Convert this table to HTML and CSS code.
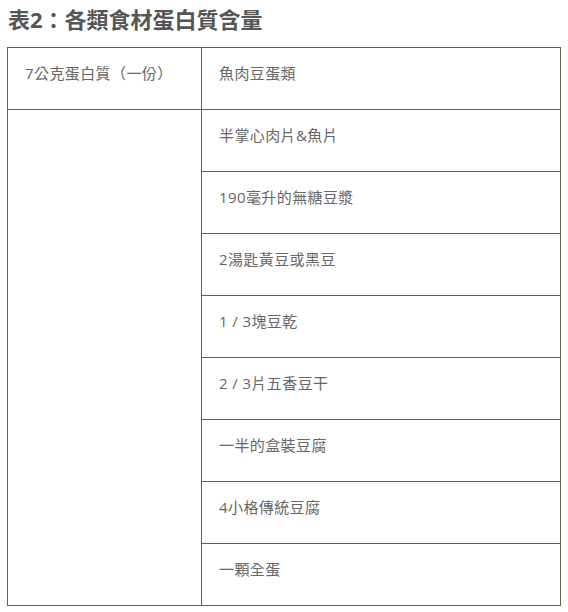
FILE: index.html
```html
<!DOCTYPE html>
<html lang="zh-Hant">
<head>
<meta charset="utf-8">
<link rel="stylesheet" href="styles.css">
</head>
<body>
<h2 class="title">表2：各類食材蛋白質含量</h2>
<table class="protein">
  <tr><td class="c1">7公克蛋白質（一份）</td><td>魚肉豆蛋類</td></tr>
  <tr><td class="c1" rowspan="8"></td><td>半掌心肉片&amp;魚片</td></tr>
  <tr><td>190毫升的無糖豆漿</td></tr>
  <tr><td>2湯匙黃豆或黑豆</td></tr>
  <tr><td>1 / 3塊豆乾</td></tr>
  <tr><td>2 / 3片五香豆干</td></tr>
  <tr><td>一半的盒裝豆腐</td></tr>
  <tr><td>4小格傳統豆腐</td></tr>
  <tr><td>一顆全蛋</td></tr>
</table>
</body>
</html>
```
FILE: styles.css
```css
html, body {
  margin: 0;
  padding: 0;
  background: #fff;
}
body {
  font-family: "Open Sans", "Noto Sans CJK TC", sans-serif;
  color: #666;
}
.title {
  margin: 0;
  padding: 4px 0 0 8px;
  font-size: 22px;
  line-height: 30px;
  font-weight: 700;
  color: #555;
  height: 42px;
  box-sizing: border-box;
}
.protein {
  margin-left: 7px;
  margin-top: 5px;
  width: 554px;
  border-collapse: collapse;
}
.protein td {
  border: 1px solid #5b6b47;
  height: 62px;
  box-sizing: border-box;
  padding: 13px 17px 14px;
  vertical-align: top;
  font-size: 15px;
  line-height: 24px;
  letter-spacing: 0.4px;
  font-weight: 400;
}
.protein td.c1 {
  width: 194px;
}
```
